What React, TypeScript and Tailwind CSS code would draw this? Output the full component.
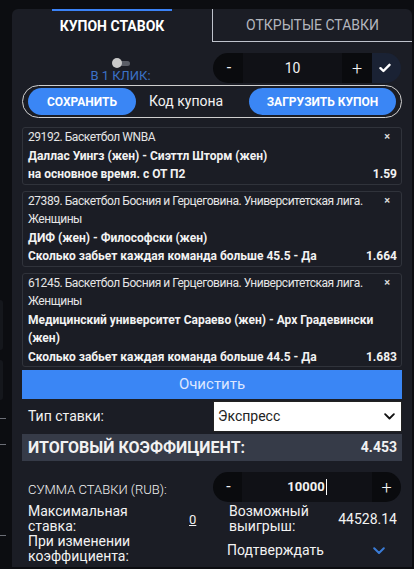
import React from "react";

const bets = [
  {
    head: ["29192. Баскетбол WNBA"],
    teams: ["Даллас Уингз (жен) - Сиэттл Шторм (жен)"],
    market: "на основное время. с ОТ П2",
    odd: "1.59",
  },
  {
    head: ["27389. Баскетбол Босния и Герцеговина. Университетская лига.", "Женщины"],
    teams: ["ДИФ (жен) - Философски (жен)"],
    market: "Сколько забьет каждая команда больше 45.5 - Да",
    odd: "1.664",
  },
  {
    head: ["61245. Баскетбол Босния и Герцеговина. Университетская лига.", "Женщины"],
    teams: ["Медицинский университет Сараево (жен) - Арх Градевински", "(жен)"],
    market: "Сколько забьет каждая команда больше 44.5 - Да",
    odd: "1.683",
  },
];

const Check = () => (
  <svg width="12" height="10" viewBox="0 0 12 10" fill="none">
    <path d="M1.5 5.2 4.4 8 10.5 1.8" stroke="#fff" strokeWidth="2.4" strokeLinecap="round" strokeLinejoin="round" />
  </svg>
);

const Chevron = ({ color, w = 12 }: { color: string; w?: number }) => (
  <svg width={w} height={w * 0.62} viewBox="0 0 12 7.4" fill="none">
    <path d="M1.2 1.2 6 6 10.8 1.2" stroke={color} strokeWidth="2" strokeLinecap="round" strokeLinejoin="round" />
  </svg>
);

export default function App() {
  return (
    <div
      className="flex h-[569px] w-[414px] overflow-hidden bg-[#0c0d11] text-[#f2f2f2]"
      style={{ fontFamily: 'Roboto, "Noto Sans", sans-serif' }}
    >
      {/* left edge of the page behind */}
      <div className="flex w-[12px] flex-col pt-[300px]">
        <div className="h-[50px] w-[3px] rounded-r-[3px] bg-[#15171c]" />
        <div className="mt-[10px] h-[40px] w-[3px] rounded-r-[3px] bg-[#15171c]" />
        <div className="mt-[18px] h-px w-[6px] bg-[#6b6e76]" />
        <div className="mt-[25px] h-px w-[6px] bg-[#6b6e76]" />
        <div className="mt-[90px] h-px w-[6px] bg-[#6b6e76]" />
      </div>

      <div className="mt-[9px] flex h-[558px] w-[400px] flex-col rounded-t-[6px] bg-[#1b1d25]">
        {/* tabs */}
        <div className="flex h-[33px]">
          <div className="flex w-[200px] flex-col items-center">
            <div className="h-[2px] w-[120px] bg-[#3b82f6]" />
            <div className="flex flex-1 items-center text-[14px] font-bold text-white">
              КУПОН СТАВОК
            </div>
          </div>
          <div className="flex w-[200px] items-center justify-center border-b border-l border-[#bfc3cc] text-[14px] text-[#b3b6be]">
            ОТКРЫТЫЕ СТАВКИ
          </div>
        </div>

        <div className="flex flex-col px-[10px]">
          {/* one click + stepper */}
          <div className="mt-[11px] flex h-[30px] items-start">
            <div className="flex w-[191px] flex-col items-center pl-[6px] pt-[6px]">
              <div className="relative h-[8px] w-[18px]">
                <div className="absolute left-[3px] top-[2px] h-[5px] w-[15px] rounded-full bg-[#5a5d66]" />
                <div className="absolute left-0 top-[-1px] h-[10px] w-[10px] rounded-full bg-[#c9c9c9]" />
              </div>
              <div className="mt-[1px] text-[13px] leading-[16px] text-[#3b72c6]">В 1 КЛИК:</div>
            </div>
            <div className="flex h-[30px] w-[188px] overflow-hidden rounded-full text-[16px]">
              <div className="flex w-[30px] items-center justify-center bg-[#0a0b0e] pl-[2px]">-</div>
              <div className="flex w-[99px] items-center justify-center bg-[#101116] text-[14px]">10</div>
              <div className="flex w-[30px] items-center justify-center bg-[#0a0b0e] text-[18px] font-light">+</div>
              <div className="flex flex-1 items-center justify-center bg-[#1a2234] pr-[4px]">
                <Check />
              </div>
            </div>
          </div>

          {/* coupon code */}
          <div className="mt-[2px] flex h-[33px] items-center rounded-full border-[1.5px] border-[#cfcfcf] px-[5px]">
            <div className="flex h-[27px] w-[108px] items-center justify-center rounded-full bg-[#3a86f5] text-[12px] font-bold text-white">
              СОХРАНИТЬ
            </div>
            <div className="ml-[13px] text-[14px]">Код купона</div>
            <div className="ml-auto flex h-[27px] w-[147px] items-center justify-center rounded-full bg-[#3a86f5] text-[12px] font-bold text-white">
              ЗАГРУЗИТЬ КУПОН
            </div>
          </div>

          {/* bets */}
          <div className="mt-[9px] flex flex-col gap-[6px]">
            {bets.map((b) => (
              <div key={b.odd} className="relative rounded-[3px] border border-[#30333b] pl-[5px] pr-[4px] text-[12px] leading-[18.5px]">
                <span className="absolute right-[11px] top-0 text-[11px] font-bold text-[#d8d8d8]">×</span>
                <div className="pr-[14px] tracking-[-0.45px] text-[#e6e6e6]">
                  {b.head.map((h) => (
                    <div key={h}>{h}</div>
                  ))}
                </div>
                {b.teams.map((t) => (
                  <div key={t} className="font-bold">{t}</div>
                ))}
                <div className="flex justify-between font-bold">
                  <span>{b.market}</span>
                  <span>{b.odd}</span>
                </div>
              </div>
            ))}
          </div>

          <div className="mt-[3px] flex h-[29px] items-center justify-center bg-[#3a86f5] text-[15px] text-[#dde7ff]">
            Очистить
          </div>

          {/* bet type */}
          <div className="mt-[2px] flex h-[31px] items-center">
            <div className="w-[191px] pl-[6px] text-[14px]">Тип ставки:</div>
            <div className="flex h-[31px] flex-1 items-center justify-between border border-[#222] bg-white pl-[4px] pr-[6px] text-[14px] text-[#222]">
              <span>Экспресс</span>
              <Chevron color="#111" w={11} />
            </div>
          </div>

          <div className="mt-[2px] flex h-[27px] items-center justify-between bg-[#363b48] pl-[6px] pr-[5px] font-bold">
            <span className="text-[16px]">ИТОГОВЫЙ КОЭФФИЦИЕНТ:</span>
            <span className="text-[14px]">4.453</span>
          </div>

          {/* stake */}
          <div className="mt-[11px] flex h-[30px] items-center">
            <div className="w-[191px] pl-[6px] pt-[6px] text-[13px] font-light">СУММА СТАВКИ (RUB):</div>
            <div className="flex h-[30px] w-[188px] overflow-hidden rounded-full text-[16px]">
              <div className="flex w-[29px] items-center justify-center bg-[#0a0b0e] pl-[2px]">-</div>
              <div className="flex w-[130px] items-center justify-center bg-[#101116] text-[13px] font-bold">
                10000<span className="ml-px h-[16px] w-px bg-white" />
              </div>
              <div className="flex flex-1 items-center justify-center bg-[#0a0b0e] text-[18px] font-light">+</div>
            </div>
          </div>

          <div className="mt-[2px] grid grid-cols-[155px_46px_1fr_auto] pl-[6px] pr-[5px] text-[14px] leading-[15px]">
            <div>
              Максимальная
              <br />
              ставка:
            </div>
            <div className="self-center pl-[6px] text-[13px] underline">0</div>
            <div>
              Возможный
              <br />
              выигрыш:
            </div>
            <div className="self-center">44528.14</div>
            <div>
              При изменении
              <br />
              коэффициента:
            </div>
            <div />
            <div className="col-span-2 flex items-center justify-between pr-[12px] pt-[3px]">
              <span className="ml-[-2px]">Подтверждать</span>
              <Chevron color="#3a7bd5" w={12} />
            </div>
          </div>
        </div>
      </div>
    </div>
  );
}
